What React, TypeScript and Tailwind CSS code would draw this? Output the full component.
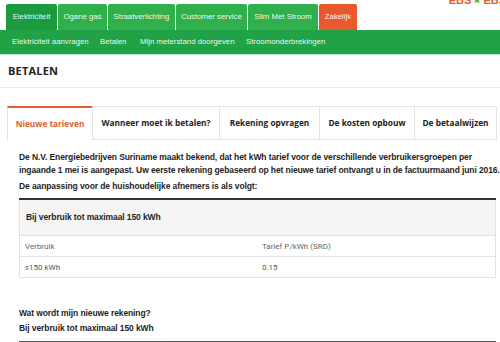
const topTabs = [
  { label: 'Elektriciteit', w: 'w-[51px]', bg: 'bg-[#1b9a3e]' },
  { label: 'Ogane gas', w: 'w-[49px]', bg: 'bg-[#2fb04d]' },
  { label: 'Straatverlichting', w: 'w-[67px]', bg: 'bg-[#2fb04d]' },
  { label: 'Customer service', w: 'w-[71px]', bg: 'bg-[#2fb04d]' },
  { label: 'Slim Met Stroom', w: 'w-[70px]', bg: 'bg-[#2fb04d]' },
  { label: 'Zakelijk', w: 'w-[38px]', bg: 'bg-[#e9582c]' },
];

const subNav = [
  { label: 'Elektriciteit aanvragen', w: 'w-[88px]' },
  { label: 'Betalen', w: 'w-[40px]' },
  { label: 'Mijn meterstand doorgeven', w: 'w-[106px]' },
  { label: 'Stroomonderbrekingen', w: '' },
];

const pageTabs = [
  { label: 'Nieuwe tarieven', w: 'w-[85px]', active: true },
  { label: 'Wanneer moet ik betalen?', w: 'w-[127px]' },
  { label: 'Rekening opvragen', w: 'w-[100px]' },
  { label: 'De kosten opbouw', w: 'w-[95px]' },
  { label: 'De betaalwijzen', w: 'w-[83px]' },
];

export default function App() {
  return (
    <div className="w-[500px] h-[342px] overflow-hidden bg-white font-['Liberation_Sans',Arial,sans-serif]">
      {/* header */}
      <div className="flex items-start justify-between h-[30px] pl-[6px]">
        <div className="flex gap-px mt-[4px]">
          {topTabs.map((t) => (
            <div
              key={t.label}
              className={`${t.w} ${t.bg} h-[26px] rounded-t-[2px] flex items-center justify-center text-[7.8px] text-white/95`}
            >
              {t.label}
            </div>
          ))}
        </div>
        <div className="flex items-center -mt-[5px] mr-[-6px] gap-[2px] font-bold text-[11px] leading-none text-[#ea5a2b]">
          <span>EBS</span>
          <span className="text-[#5cb531] text-[9px]">★</span>
          <span>EBS</span>
        </div>
      </div>

      <div className="h-[24px] bg-[#21a246] flex items-center pl-[12px] text-[7.8px] text-white/95">
        {subNav.map((s) => (
          <div key={s.label} className={s.w}>
            {s.label}
          </div>
        ))}
      </div>
      <div className="h-px bg-[#bdf0c9]" />

      {/* title */}
      <div className="h-[33px] border-b border-[#ececec] flex items-center pl-[8px] pt-[1px] font-['Open_Sans',sans-serif] font-bold text-[11px] text-[#222] tracking-[0.2px]">
        BETALEN
      </div>

      {/* page tabs */}
      <div className="mt-[18px] ml-[7px] flex font-['Open_Sans',sans-serif] font-bold text-[8.3px]">
        {pageTabs.map((t) =>
          t.active ? (
            <div
              key={t.label}
              className={`${t.w} h-[34px] border-t-2 border-t-[#e0612f] border-l border-[#e3e3e3] flex items-center justify-center text-[#e0612f]`}
            >
              {t.label}
            </div>
          ) : (
            <div
              key={t.label}
              className={`${t.w} h-[34px] border-t border-l border-b border-[#e3e3e3] bg-white flex items-center justify-center text-[#222] last:border-r`}
            >
              {t.label}
            </div>
          )
        )}
      </div>

      {/* content */}
      <div className="pl-[19px] pt-[11px] text-[#1e1e1e] font-bold text-[8.5px] leading-[13px] tracking-[-0.1px]">
        <p className="whitespace-nowrap">
          De N.V. Energiebedrijven Suriname maakt bekend, dat het kWh tarief voor de verschillende verbruikersgroepen per
          <br />
          ingaande 1 mei is aangepast. Uw eerste rekening gebaseerd op het nieuwe tarief ontvangt u in de factuurmaand juni 2016.
        </p>
        <p className="mt-[3px]">De aanpassing voor de huishoudelijke afnemers is als volgt:</p>

        <div className="mt-[5px] mr-[4px] border-t-2 border-[#333]">
          <div className="h-[35px] bg-[#f5f5f5] border-x border-[#e2e2e2] flex items-center pl-[6px]">
            Bij verbruik tot maximaal 150 kWh
          </div>
          <div className="border border-[#e2e2e2] font-['Roboto',sans-serif] font-normal tracking-normal text-[8px] text-[#666]">
            <div className="h-[21px] flex items-center border-b border-[#e2e2e2]">
              <div className="w-[242px] pl-[5px]">Verbruik</div>
              <div>Tarief P/kWh (SRD)</div>
            </div>
            <div className="h-[20px] flex items-center text-[#555]">
              <div className="w-[242px] pl-[5px]">≤150 kWh</div>
              <div>0.15</div>
            </div>
          </div>
        </div>

        <p className="mt-[29px]">Wat wordt mijn nieuwe rekening?</p>
        <p className="mt-[2px]">Bij verbruik tot maximaal 150 kWh</p>
        <div className="mt-[6px] mr-[4px] border-t-2 border-[#555]" />
      </div>
    </div>
  );
}
